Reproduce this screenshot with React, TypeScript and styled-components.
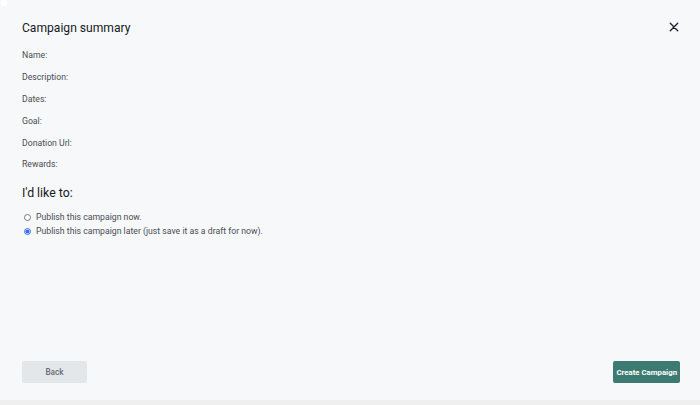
import React, { useState } from 'react'
import styled, { createGlobalStyle } from 'styled-components'

const GlobalStyle = createGlobalStyle`
  html, body {
    margin: 0;
    padding: 0;
    background: #efeff0;
    font-family: Roboto, "Liberation Sans", Arial, sans-serif;
  }
`

const Modal = styled.div`
  position: relative;
  height: 400px;
  box-sizing: border-box;
  display: flex;
  flex-direction: column;
  padding: 19px 20px 17px 22px;
  background: #f7f8fa;
  box-shadow: 0 1px 6px rgba(0, 0, 0, 0.06);
`

const Dot = styled.span`
  position: absolute;
  left: 1px;
  top: 0;
  width: 6px;
  height: 6px;
  border-radius: 50%;
  background: #ffffff;
`

const Header = styled.div`
  display: flex;
  align-items: center;
  justify-content: space-between;
  height: 18px;
`

const Title = styled.h2`
  margin: 0;
  font-size: 12.1px;
  font-weight: 400;
  color: #16181c;
`

const CloseButton = styled.button`
  display: flex;
  align-items: center;
  justify-content: center;
  width: 14px;
  height: 14px;
  padding: 0;
  margin-right: -1px;
  margin-top: -3px;
  border: none;
  background: none;
  cursor: pointer;
`

const Summary = styled.div`
  display: flex;
  flex-direction: column;
  gap: 11.9px;
  margin-top: 13px;
`

const Label = styled.div`
  font-size: 8.7px;
  line-height: 10px;
  color: #4a4d52;
`

const Heading = styled.h3`
  margin: 17px 0 0;
  font-size: 12.3px;
  line-height: 14px;
  font-weight: 400;
  color: #16181c;
`

const Options = styled.div`
  display: flex;
  flex-direction: column;
  gap: 4px;
  margin-top: 12px;
  padding-left: 2px;
`

const Option = styled.label`
  display: flex;
  align-items: center;
  gap: 4px;
  height: 10px;
  font-size: 8.7px;
  color: #4a4d52;
  cursor: pointer;
`

const Radio = styled.input`
  width: 7px;
  height: 7px;
  margin: 0 1px 0 0;
  accent-color: #3b6fe6;
`

const Spacer = styled.div`
  flex: 1;
`

const Footer = styled.div`
  display: flex;
  align-items: center;
  justify-content: space-between;
`

const Button = styled.button<{ $primary?: boolean }>`
  height: 22px;
  padding: 0 3px;
  min-width: 65px;
  border: none;
  border-radius: 2px;
  font-family: inherit;
  font-size: ${({ $primary }) => ($primary ? '7.8px' : '8.2px')};
  font-weight: ${({ $primary }) => ($primary ? 700 : 500)};
  color: ${({ $primary }) => ($primary ? '#ffffff' : '#676c73')};
  background: ${({ $primary }) => ($primary ? '#3c7a72' : '#e4e7ea')};
  cursor: pointer;
`

const fields = ['Name:', 'Description:', 'Dates:', 'Goal:', 'Donation Url:', 'Rewards:']

export default function App() {
  const [publish, setPublish] = useState<'now' | 'later'>('later')

  return (
    <>
      <GlobalStyle />
      <Modal>
        <Dot />
        <Header>
          <Title>Campaign summary</Title>
          <CloseButton aria-label="Close">
            <svg width="10" height="10" viewBox="0 0 10 10">
              <path d="M1.3 1.3 L8.7 8.7 M8.7 1.3 L1.3 8.7" stroke="#1d2430" strokeWidth="1.4" strokeLinecap="round" />
            </svg>
          </CloseButton>
        </Header>
        <Summary>
          {fields.map((f) => (
            <Label key={f}>{f}</Label>
          ))}
        </Summary>
        <Heading>I'd like to:</Heading>
        <Options>
          <Option>
            <Radio type="radio" name="publish" checked={publish === 'now'} onChange={() => setPublish('now')} />
            Publish this campaign now.
          </Option>
          <Option>
            <Radio type="radio" name="publish" checked={publish === 'later'} onChange={() => setPublish('later')} />
            Publish this campaign later (just save it as a draft for now).
          </Option>
        </Options>
        <Spacer />
        <Footer>
          <Button>Back</Button>
          <Button $primary>Create Campaign</Button>
        </Footer>
      </Modal>
    </>
  )
}
